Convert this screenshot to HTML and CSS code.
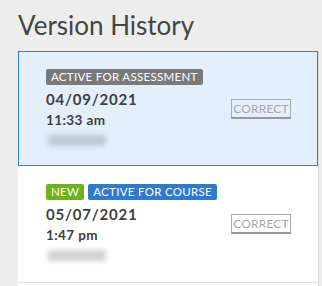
FILE: index.html
```html
<!DOCTYPE html>
<html>
	<head>
		<title>Version History</title>
		<link rel="stylesheet" href="styles.css">
	</head>
	<body>
		<h1>Version History</h1>
		<div class="history_list">
			<div class="version_row selected">
				<div class="version_info">
					<div class="tag_line">
						<span class="tag tag_gray">Active for assessment</span>
					</div>
					<p class="date_text">04/09/2021</p>
					<p class="time_text">11:33 am</p>
					<div class="author_blur"></div>
				</div>
				<button type="button" class="correct_btn">CORRECT</button>
			</div>
			<div class="version_row">
				<div class="version_info">
					<div class="tag_line">
						<span class="tag tag_green">New</span>
						<span class="tag tag_blue">Active for course</span>
					</div>
					<p class="date_text">05/07/2021</p>
					<p class="time_text">1:47 pm</p>
					<div class="author_blur"></div>
				</div>
				<button type="button" class="correct_btn">CORRECT</button>
			</div>
		</div>
	</body>
</html>
```
FILE: styles.css
```css
body {
	margin: 0;
	padding: 0 0 0 18px;
	background: #ededed;
	font-family: Lato, "Open Sans", sans-serif;
	color: #444;
}
h1 {
	font-size: 26px;
	font-weight: 400;
	color: #454545;
	margin: 0;
	padding: 9px 0 10px 0;
	line-height: 32px;
}
.history_list {
	width: 300px;
	background: #fff;
	border-right: 1px solid #dcdcdc;
	height: 240px;
}
.version_row {
	display: flex;
	align-items: center;
	justify-content: space-between;
	padding: 18px 27px 18px 28px;
	border-bottom: 1px solid #e0e0e0;
}
.version_row.selected {
	padding: 17px 26px 16px 27px;
	background: #e3f0fb;
	border: 1px solid #2f7fd6;
}
.tag_line {
	display: flex;
	gap: 4px;
	margin-bottom: 4px;
}
.tag {
	display: inline-block;
	height: 16px;
	line-height: 16px;
	padding: 0 5px;
	border-radius: 2px;
	font-size: 11.5px;
	color: #fff;
	text-transform: uppercase;
	letter-spacing: 0.3px;
}
.tag_gray {
	background: #7a7a7a;
}
.tag_green {
	background: #6cb31e;
}
.tag_blue {
	background: #2e7ad1;
}
.date_text {
	margin: 0;
	font-size: 15px;
	font-weight: 700;
	line-height: 20px;
	color: #404040;
	letter-spacing: 0.8px;
}
.time_text {
	margin: 0;
	font-size: 13.5px;
	font-weight: 700;
	line-height: 22px;
	color: #404040;
	letter-spacing: 0.4px;
}
.author_blur {
	width: 58px;
	height: 11px;
	margin: 4px 0 3px 2px;
	background: #bdcad4;
	filter: blur(2.5px);
}
.version_row:not(.selected) .author_blur {
	background: #d2d2d2;
}
.correct_btn {
	font-family: Lato, sans-serif;
	font-size: 12px;
	color: #a9a9a9;
	background: transparent;
	border: 1px solid #aaa;
	border-bottom: 2px solid #999;
	height: 20px;
	width: 60px;
	padding: 0;
	line-height: 16px;
	letter-spacing: 0.2px;
}
```
